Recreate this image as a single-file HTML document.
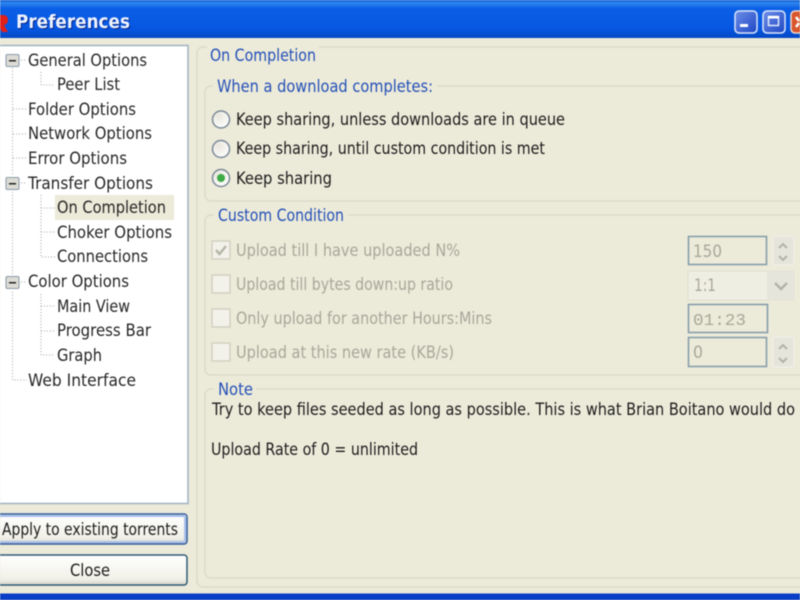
<!DOCTYPE html>
<html><head><meta charset="utf-8"><title>Preferences</title>
<style>
html,body{margin:0;padding:0;width:800px;height:600px;overflow:hidden;background:#ecead9}
svg{display:block;filter:blur(.5px)}
text{font-family:"DejaVu Sans","Liberation Sans",sans-serif;font-size:17px;fill:#1c1c1c}
.b{fill:#2450b8}
.g{fill:#a8a79a}
.t{fill:#262626}
</style></head><body>
<svg width="800" height="600" viewBox="0 0 800 600" xmlns="http://www.w3.org/2000/svg">
<defs>
<linearGradient id="tb" x1="0" y1="0" x2="0" y2="1">
<stop offset="0" stop-color="#0a5ad8"/><stop offset=".08" stop-color="#2f86ee"/><stop offset=".22" stop-color="#0b5fe6"/><stop offset=".75" stop-color="#0757e2"/><stop offset="1" stop-color="#0348c4"/>
</linearGradient>
<linearGradient id="bt" x1="0" y1="0" x2="0" y2="1"><stop offset="0" stop-color="#fff"/><stop offset=".8" stop-color="#f1f0e8"/><stop offset="1" stop-color="#d8d5c6"/></linearGradient>
<linearGradient id="wb" x1="0" y1="0" x2="1" y2="1"><stop offset="0" stop-color="#6f8fe8"/><stop offset="1" stop-color="#1c45c4"/></linearGradient>
<radialGradient id="rd" cx=".35" cy=".3" r=".8"><stop offset="0" stop-color="#e8e6dc"/><stop offset="1" stop-color="#fff"/></radialGradient>
</defs>

<rect width="800" height="600" fill="#ecead9"/>
<!-- title bar -->
<rect width="800" height="38" fill="url(#tb)"/>
<text x="17" y="29" textLength="114" lengthAdjust="spacingAndGlyphs" style="font-size:19px;font-weight:bold;fill:#06268a">Preferences</text>
<text x="16" y="28" textLength="114" lengthAdjust="spacingAndGlyphs" style="font-size:19px;font-weight:bold;fill:#eef3ff">Preferences</text>
<path d="M-2 15H3Q8 15 8 20Q8 24 4 25L8 32H2L-1 26" fill="#e0201c"/>
<rect x="735" y="11" width="22" height="22" rx="4" fill="url(#wb)" stroke="#dbe6fb" stroke-width="1.5"/>
<rect x="740" y="24" width="8" height="3" fill="#fff"/>
<rect x="763" y="11" width="22" height="22" rx="4" fill="url(#wb)" stroke="#dbe6fb" stroke-width="1.5"/>
<rect x="768.500" y="16.500" width="10" height="9" fill="none" stroke="#dfe8fb" stroke-width="1.500"/>
<rect x="768" y="16" width="11" height="2.500" fill="#fff"/>
<rect x="791" y="11" width="22" height="22" rx="4" fill="#d9562c" stroke="#f0d6c8" stroke-width="1.5"/>
<path d="M796 17l3 4M796 27l3-4" stroke="#fff" stroke-width="2.500"/>

<!-- tree panel -->
<rect x="-3" y="45.500" width="191" height="458" fill="#fff" stroke="#9fb2c0" stroke-width="1.500"/>
<rect x="55" y="195" width="119" height="25" fill="#ecead9"/>
<g stroke="#a5a5a5" stroke-width="1" stroke-dasharray="1 2" fill="none">
<path d="M12.500 68V174M12.500 192V274M12.500 292V380H27M21 60H27M21 183H27M21 282H27M41 72V85H55M13 109H27M13 134H27M13 158H27M41 195V257H55M41 208H55M41 232H55M41 294V355H55M41 306H55M41 331H55"/>
</g>
<g>
<rect x="6" y="54.500" width="13" height="12" rx="1.500" fill="#dcdcd4" stroke="#8a98a8"/><rect x="9" y="60" width="7" height="1.500" fill="#222"/>
<rect x="6" y="177.500" width="13" height="12" rx="1.500" fill="#dcdcd4" stroke="#8a98a8"/><rect x="9" y="183" width="7" height="1.500" fill="#222"/>
<rect x="6" y="276.500" width="13" height="12" rx="1.500" fill="#dcdcd4" stroke="#8a98a8"/><rect x="9" y="282" width="7" height="1.500" fill="#222"/>
</g>
<g class="tree">
<text class="t" x="28" y="66" textLength="119" lengthAdjust="spacingAndGlyphs">General Options</text>
<text class="t" x="57" y="90" textLength="63" lengthAdjust="spacingAndGlyphs">Peer List</text>
<text class="t" x="28" y="115" textLength="108" lengthAdjust="spacingAndGlyphs">Folder Options</text>
<text class="t" x="28" y="139" textLength="124" lengthAdjust="spacingAndGlyphs">Network Options</text>
<text class="t" x="28" y="164" textLength="99" lengthAdjust="spacingAndGlyphs">Error Options</text>
<text class="t" x="28" y="189" textLength="125" lengthAdjust="spacingAndGlyphs">Transfer Options</text>
<text class="t" x="57" y="213" textLength="109" lengthAdjust="spacingAndGlyphs">On Completion</text>
<text class="t" x="57" y="238" textLength="115" lengthAdjust="spacingAndGlyphs">Choker Options</text>
<text class="t" x="57" y="262" textLength="91" lengthAdjust="spacingAndGlyphs">Connections</text>
<text class="t" x="28" y="287" textLength="101" lengthAdjust="spacingAndGlyphs">Color Options</text>
<text class="t" x="57" y="312" textLength="73" lengthAdjust="spacingAndGlyphs">Main View</text>
<text class="t" x="57" y="336" textLength="94" lengthAdjust="spacingAndGlyphs">Progress Bar</text>
<text class="t" x="57" y="361" textLength="45" lengthAdjust="spacingAndGlyphs">Graph</text>
<text class="t" x="28" y="386" textLength="108" lengthAdjust="spacingAndGlyphs">Web Interface</text>
</g>

<!-- buttons -->
<rect x="-6" y="514" width="193" height="30" rx="3" fill="url(#bt)" stroke="#2f5a9c" stroke-width="1.500"/>
<rect x="-4" y="516" width="189" height="26" rx="2" fill="none" stroke="#a8c0ec" stroke-width="2"/>
<text x="2" y="535" textLength="176" lengthAdjust="spacingAndGlyphs">Apply to existing torrents</text>
<rect x="-6" y="555" width="193" height="30" rx="3" fill="url(#bt)" stroke="#2f5a78" stroke-width="1.500"/>
<text x="70" y="576" textLength="40" lengthAdjust="spacingAndGlyphs">Close</text>

<!-- group boxes -->
<g fill="none" stroke="#dcdac8" stroke-width="1.500">
<rect x="197" y="47" width="640" height="540" rx="6"/>
<rect x="205" y="86" width="620" height="115" rx="6"/>
<rect x="205" y="215" width="620" height="160" rx="6"/>
<rect x="205" y="389" width="620" height="189" rx="6"/>
</g>
<rect x="207" y="44" width="112" height="22" fill="#ecead9"/>
<rect x="213" y="76" width="224" height="22" fill="#ecead9"/>
<rect x="214" y="205" width="134" height="22" fill="#ecead9"/>
<rect x="214" y="379" width="42" height="20" fill="#ecead9"/>
<text class="b" x="210" y="61" textLength="106" lengthAdjust="spacingAndGlyphs">On Completion</text>
<text class="b" x="217" y="92" textLength="216" lengthAdjust="spacingAndGlyphs">When a download completes:</text>
<text class="b" x="218" y="221" textLength="126" lengthAdjust="spacingAndGlyphs">Custom Condition</text>
<text class="b" x="218" y="395" textLength="35" lengthAdjust="spacingAndGlyphs">Note</text>

<!-- radios -->
<g stroke="#7b8a98" stroke-width="1.500" fill="url(#rd)">
<circle cx="221" cy="119.500" r="8.500"/>
<circle cx="221" cy="149" r="8.500"/>
<circle cx="221" cy="178" r="8.500"/>
</g>
<circle cx="221" cy="178" r="4" fill="#3cab46"/>
<text x="236" y="125" textLength="329" lengthAdjust="spacingAndGlyphs">Keep sharing, unless downloads are in queue</text>
<text x="236" y="154" textLength="309" lengthAdjust="spacingAndGlyphs">Keep sharing, until custom condition is met</text>
<text x="236" y="184" textLength="96" lengthAdjust="spacingAndGlyphs">Keep sharing</text>

<!-- checkboxes -->
<g fill="#f3f2ea" stroke="#d2d0c0" stroke-width="1.500">
<rect x="212" y="241" width="18" height="18"/>
<rect x="212" y="275" width="18" height="18"/>
<rect x="212" y="309" width="18" height="18"/>
<rect x="212" y="343" width="18" height="18"/>
</g>
<path d="M216 250l3.500 4 6.500-8" fill="none" stroke="#b8b7aa" stroke-width="2.500"/>
<text class="g" x="236" y="256" textLength="224" lengthAdjust="spacingAndGlyphs">Upload till I have uploaded N%</text>
<text class="g" x="236" y="290" textLength="217" lengthAdjust="spacingAndGlyphs">Upload till bytes down:up ratio</text>
<text class="g" x="236" y="324" textLength="256" lengthAdjust="spacingAndGlyphs">Only upload for another Hours:Mins</text>
<text class="g" x="236" y="358" textLength="218" lengthAdjust="spacingAndGlyphs">Upload at this new rate (KB/s)</text>

<!-- inputs -->
<g fill="#ecead9" stroke="#8299a8" stroke-width="1.500">
<rect x="688.500" y="236.500" width="78" height="28"/>
<rect x="688.500" y="304.500" width="79" height="28"/>
<rect x="688.500" y="337.500" width="78" height="29"/>
</g>
<rect x="688" y="271" width="106" height="29" fill="#efeee2" stroke="#e0ded0"/>
<rect x="767" y="271" width="27" height="29" fill="#e6e5dc"/>
<path d="M775 283l6 6 6-6" fill="none" stroke="#b4b3a8" stroke-width="2.500"/>
<rect x="773" y="236" width="21" height="29" rx="2" fill="#e6e5dc" stroke="#f2f1e8"/>
<rect x="773" y="337" width="21" height="30" rx="2" fill="#e6e5dc" stroke="#f2f1e8"/>
<path d="M779 248l4-4 4 4M779 256l4 4 4-4M779 349l4-4 4 4M779 358l4 4 4-4" fill="none" stroke="#b4b3a8" stroke-width="2"/>
<text class="g" x="693" y="257" textLength="29" lengthAdjust="spacingAndGlyphs">150</text>
<text class="g" x="694" y="291" textLength="22" lengthAdjust="spacingAndGlyphs">1:1</text>
<text class="g" x="693" y="325" textLength="53" lengthAdjust="spacingAndGlyphs" style="font-family:'Liberation Mono',monospace">01:23</text>
<text class="g" x="693" y="358" textLength="10" lengthAdjust="spacingAndGlyphs">0</text>

<!-- note -->
<text x="212" y="415" textLength="583" lengthAdjust="spacingAndGlyphs">Try to keep files seeded as long as possible. This is what Brian Boitano would do</text>
<text x="211" y="455" textLength="207" lengthAdjust="spacingAndGlyphs">Upload Rate of 0 = unlimited</text>

<!-- bottom bar -->
<rect y="593.500" width="800" height="7" fill="#0a3fc8"/>
</svg>
</body></html>
